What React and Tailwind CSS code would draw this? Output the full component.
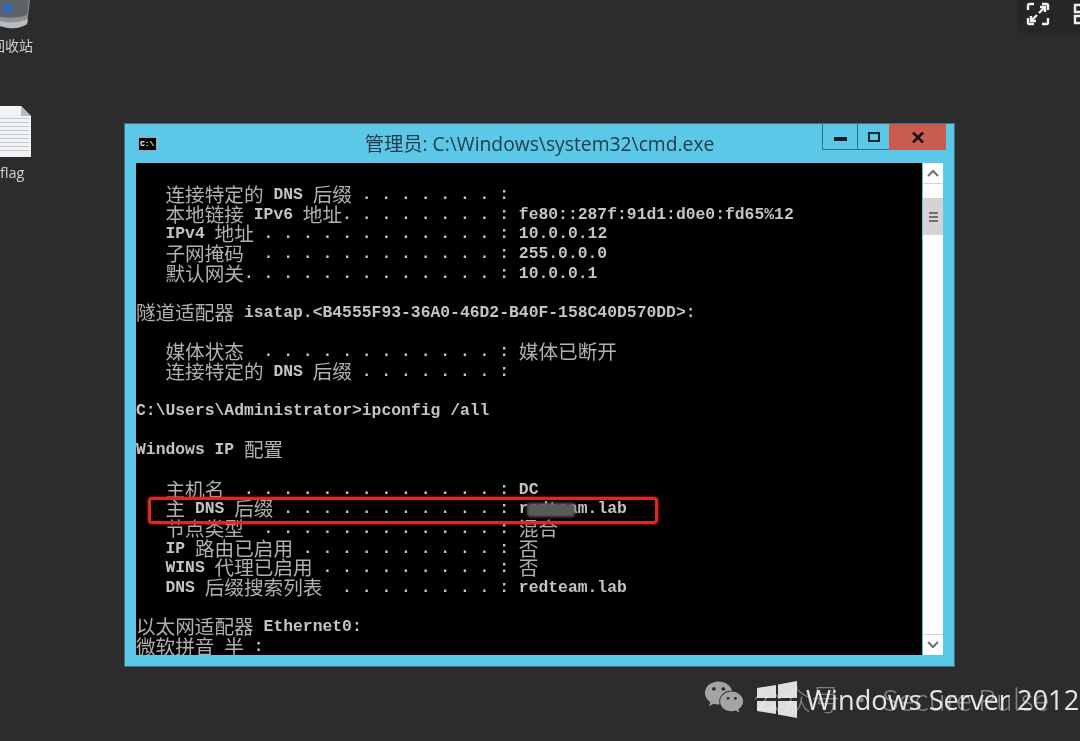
import React from "react";
import { FaWeixin } from "react-icons/fa";

const LINES = [
  "   连接特定的 DNS 后缀 . . . . . . . :",
  "   本地链接 IPv6 地址. . . . . . . . : fe80::287f:91d1:d0e0:fd65%12",
  "   IPv4 地址 . . . . . . . . . . . . : 10.0.0.12",
  "   子网掩码  . . . . . . . . . . . . : 255.0.0.0",
  "   默认网关. . . . . . . . . . . . . : 10.0.0.1",
  "",
  "隧道适配器 isatap.<B4555F93-36A0-46D2-B40F-158C40D570DD>:",
  "",
  "   媒体状态  . . . . . . . . . . . . : 媒体已断开",
  "   连接特定的 DNS 后缀 . . . . . . . :",
  "",
  "C:\\Users\\Administrator>ipconfig /all",
  "",
  "Windows IP 配置",
  "",
  "   主机名  . . . . . . . . . . . . . : DC",
  "   主 DNS 后缀 . . . . . . . . . . . : redteam.lab",
  "   节点类型  . . . . . . . . . . . . : 混合",
  "   IP 路由已启用 . . . . . . . . . . : 否",
  "   WINS 代理已启用 . . . . . . . . . : 否",
  "   DNS 后缀搜索列表  . . . . . . . . : redteam.lab",
  "",
  "以太网适配器 Ethernet0:",
  "微软拼音 半 :",
];

function ConsoleLine({ text }) {
  const parts = text.split(/([\u4e00-\u9fff]+)/).filter(Boolean);
  return (
    <div className="flex items-center h-[19.65px] whitespace-pre">
      {parts.map((p, i) =>
        /[\u4e00-\u9fff]/.test(p) ? (
          <span key={i} className="text-[19.64px] leading-[19.65px] font-normal text-[#b0b0b0] font-['Noto_Sans_CJK_SC',sans-serif]">
            {p}
          </span>
        ) : (
          <span key={i} className="relative top-px leading-[19.65px]">{p}</span>
        )
      )}
    </div>
  );
}

function RecycleBin() {
  return (
    <svg width="32" height="30" viewBox="0 0 32 30">
      <path d="M0 0H30L27 24Q20 29 8 28L0 26Z" fill="#8d9296" />
      <path d="M0 0H29L27 15Q16 19 0 17Z" fill="#5b6369" />
      <path d="M3 6L10 3L13 9L9 13L3 12Z" fill="#2a66c4" />
      <path d="M0 21Q14 25 28 19L27 24Q20 29 8 28L0 26Z" fill="#b9bdc0" />
    </svg>
  );
}

function FileIcon() {
  return (
    <svg width="32" height="52" viewBox="0 0 32 52">
      <path d="M0 0H21L31 10V51H0Z" fill="#f1f3f5" />
      <path d="M21 0L31 10H21Z" fill="#b7bcc2" />
      {[12, 16, 20, 24, 28, 32, 36, 40, 44].map((y) => (
        <rect key={y} x="0" y={y} width="29" height="1" fill="#c4c9d2" />
      ))}
    </svg>
  );
}

export default function App() {
  return (
    <div className="relative w-[1080px] h-[741px] overflow-hidden bg-[#2c2c2c] font-['Open_Sans','Noto_Sans_CJK_SC',sans-serif]">
      {/* desktop icons */}
      <div className="absolute left-0 top-0 blur-[0.5px]"><RecycleBin /></div>
      <div className="absolute left-[-9px] top-[35px] text-[14px] leading-[20px] text-[#d0d0d0] font-['Noto_Sans_CJK_SC',sans-serif] blur-[0.3px]">回收站</div>
      <div className="absolute left-0 top-[106px] blur-[0.5px]"><FileIcon /></div>
      <div className="absolute left-0 top-[163px] text-[14.5px] leading-[20px] text-[#d0d0d0] blur-[0.3px]">flag</div>

      {/* top-right toolbar */}
      <div className="absolute left-[1017px] top-0 w-[63px] h-[35px] rounded-bl-[10px] bg-[#262626] flex items-start gap-[23px] pl-[9px] pt-[2px]">
        <svg width="24" height="24" viewBox="0 0 24 24" fill="none" stroke="#f0f0f0" strokeWidth="2.4" className="shrink-0">
          <path d="M2 8V3.5Q2 2 3.5 2H8M16 2H20.5Q22 2 22 3.5V8M2 16V20.500Q2 22 3.500 22H8M16 22H20.500Q22 22 22 20.500V16" />
          <path d="M13 11L19 5M14 5H19V10M11 13L5 19M5 14V19H10" />
        </svg>
        <svg width="24" height="24" viewBox="0 0 24 24" fill="none" stroke="#f0f0f0" strokeWidth="2.4" className="shrink-0">
          <path d="M2 3H10V10H2ZM2 14H10V21H2Z" />
        </svg>
      </div>

      {/* cmd window */}
      <div className="absolute left-[125px] top-[124px] w-[829px] h-[542px] flex flex-col bg-[#5cc8e8] shadow-[0_0_0_1px_#3f6f80]">
        <div className="relative h-[39px] shrink-0 flex items-center justify-center">
          <div className="absolute left-[13px] top-[13px] w-[19px] h-[14px] bg-black border border-[#9aa7ad] text-[8px] leading-[11px] font-bold text-white font-['Liberation_Mono',monospace] pl-[1px]">C:\</div>
          <span className="text-[19.3px] leading-[26px] text-[#243c4a] blur-[0.3px]">管理员: C:\Windows\system32\cmd.exe</span>
          <div className="absolute right-[8px] top-0 flex h-[26px]">
            <div className="w-[35px] border-l border-b border-[#2c7590] flex items-center justify-center">
              <div className="w-[13px] h-[4px] mt-[5px] bg-[#0c1c26]" />
            </div>
            <div className="w-[32px] border-l border-b border-[#2c7590] flex items-center justify-center">
              <div className="w-[12px] h-[10px] border-[2.5px] border-[#0c2030]" />
            </div>
            <div className="w-[57px] bg-[#c85c50] flex items-center justify-center">
              <svg width="12" height="11" viewBox="0 0 12 11" stroke="#1a1010" strokeWidth="2.6"><path d="M1 0.500L11 10.500M11 0.500L1 10.500" /></svg>
            </div>
          </div>
        </div>

        <div className="flex flex-1 min-h-0 pl-[11px] pr-[11px] pb-[11px]">
          <div className="relative w-[787px] bg-black overflow-hidden pt-[21px] text-[16.37px] font-bold text-[#c4c4c4] font-['Liberation_Mono','Noto_Sans_CJK_SC',monospace]">
            <div className="blur-[0.45px]">
              {LINES.map((l, i) => (
                <ConsoleLine key={i} text={l} />
              ))}
            </div>
            {/* blurred redaction */}
            <div className="absolute left-[391px] top-[340px] w-[48px] h-[14px] bg-[#5a5a5a] rounded-[3px] blur-[1.5px]" />
            {/* red highlight */}
            <div className="absolute left-[12px] top-[334px] w-[510px] h-[27px] border-[3px] border-[#d92a26] rounded-[4px] blur-[0.4px] shadow-[0_0_3px_#e02020]" />
          </div>
          <div className="w-[20px] ml-px bg-white flex flex-col">
            <div className="h-[21px] shrink-0 flex items-center justify-center border-b border-[#d4d4d4]">
              <svg width="12" height="8" viewBox="0 0 12 8" fill="none" stroke="#707070" strokeWidth="2"><path d="M1 7L6 2L11 7" /></svg>
            </div>
            <div className="h-[14px] shrink-0" />
            <div className="h-[37px] shrink-0 bg-[#d4d4d4] flex flex-col items-center justify-center gap-[2px]">
              <div className="w-[9px] h-[2px] bg-[#707070]" />
              <div className="w-[9px] h-[2px] bg-[#707070]" />
              <div className="w-[9px] h-[2px] bg-[#707070]" />
            </div>
            <div className="flex-1" />
            <div className="h-[21px] shrink-0 flex items-center justify-center border-t border-[#d4d4d4]">
              <svg width="12" height="8" viewBox="0 0 12 8" fill="none" stroke="#707070" strokeWidth="2"><path d="M1 1L6 6L11 1" /></svg>
            </div>
          </div>
        </div>
      </div>

      {/* watermark */}
      <div className="absolute left-[704px] top-[677px] text-[#a4a4a4] blur-[0.3px]"><FaWeixin size={40} /></div>
      <div className="absolute left-[753px] top-[679px] text-[29px] leading-[38px] whitespace-nowrap text-[#808080] font-['Noto_Sans_CJK_SC',sans-serif] font-light blur-[0.4px]">公众号 · Secure Pulse</div>
      <svg className="absolute left-[757px] top-[681px] opacity-90 blur-[0.5px]" width="41" height="37" viewBox="0 0 41 37">
        <path d="M0 7L19 4V17H0ZM0 20H19V33L0 30ZM21 3.500L40 0V17H21ZM21 20H40V37L21 33.500Z" fill="#f2f2f2" />
      </svg>
      <div className="absolute left-[806px] top-[681px] text-[27.2px] leading-[38px] whitespace-nowrap text-[#e6e6e6] blur-[0.3px]">Windows Server 2012</div>
    </div>
  );
}
